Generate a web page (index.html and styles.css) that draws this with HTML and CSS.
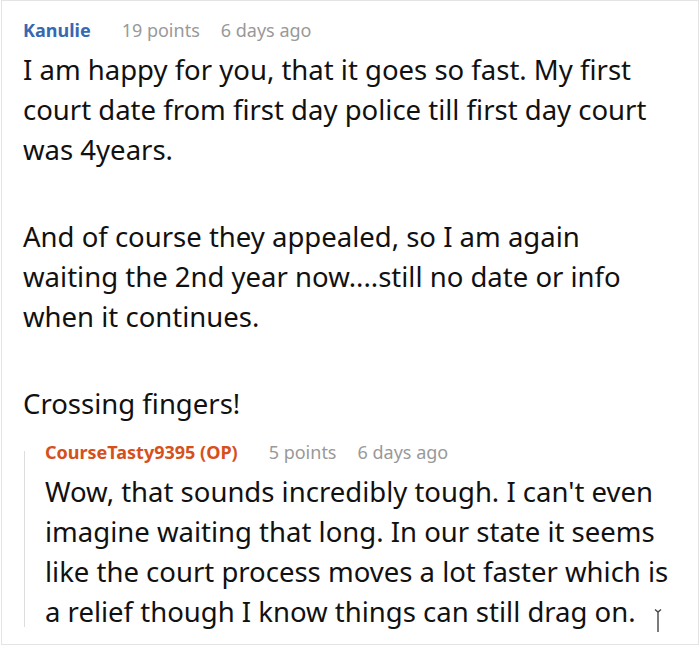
FILE: index.html
```html
<!DOCTYPE html>
<html>
<head>
<meta charset="utf-8">
<link rel="stylesheet" href="styles.css">
</head>
<body>
<div class="frame">
  <div class="comment">
    <div class="meta">
      <span class="author">Kanulie</span>
      <span class="points">19 points</span>
      <span class="age">6 days ago</span>
    </div>
    <div class="body">
      <p>I am happy for you, that it goes so fast. My first court date from first day police till first day court was 4years.</p>
      <p>And of course they appealed, so I am again waiting the 2nd year now....still no date or info when it continues.</p>
      <p>Crossing fingers!</p>
    </div>
    <div class="reply">
      <div class="meta">
        <span class="author op">CourseTasty9395 (OP)</span>
        <span class="points">5 points</span>
        <span class="age">6 days ago</span>
      </div>
      <div class="body">
        <p>Wow, that sounds incredibly tough. I can't even imagine waiting that long. In our state it seems like the court process moves a lot faster which is a relief though I know things can still drag on.</p>
      </div>
    </div>
  </div>
  <svg class="cursor" width="8" height="26" viewBox="0 0 8 26"><path d="M1 1.5 L4 4 L7 1.5 M4 4 V24" stroke="#444" stroke-width="1.4" fill="none"/></svg>
</div>
</body>
</html>
```
FILE: styles.css
```css
html, body {
  margin: 0;
  padding: 0;
  background: #fff;
}
body {
  font-family: "Noto Sans", "Open Sans", sans-serif;
  color: #111;
}
.frame {
  position: relative;
  margin-left: 1px;
  width: 698px;
  height: 645px;
  border: 1px solid #e4e4e4;
  box-sizing: border-box;
  overflow: hidden;
}
.comment {
  padding: 14px 23px 0 21px;
}
.meta {
  font-size: 18px;
  line-height: 30px;
  display: flex;
  align-items: baseline;
}
.author {
  font-weight: bold;
  color: #3768b2;
  margin-right: 31px;
}
.author.op {
  color: #d6501c;
}
.points, .age {
  color: #999;
}
.points {
  margin-right: 21px;
}
.body {
  font-size: 27.5px;
  line-height: 40px;
  margin-top: 5px;
}
.body p {
  margin: 0 0 47px 0;
}
.comment > .body p:last-child {
  margin-bottom: 13px;
}
.reply {
  position: relative;
  margin-left: 1px;
  padding-left: 21px;
}
.reply::before {
  content: "";
  position: absolute;
  left: 0;
  top: 14px;
  bottom: 5px;
  border-left: 1px solid #ddd;
}
.reply .body p {
  margin: 0;
}
.cursor {
  position: absolute;
  left: 652px;
  top: 607px;
}
```
